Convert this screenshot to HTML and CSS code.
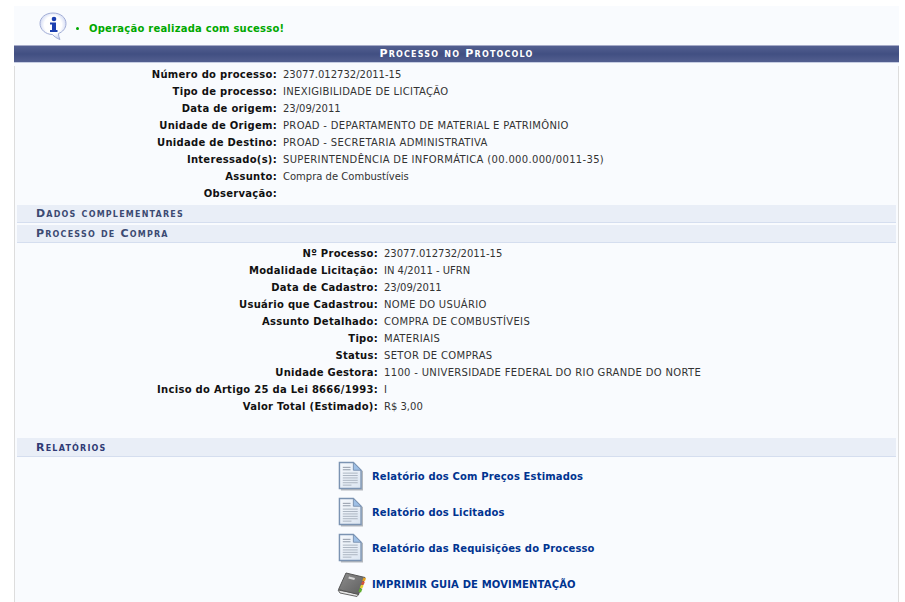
FILE: index.html
```html
<!DOCTYPE html>
<html lang="en">
<head>
    <meta charset="UTF-8">
    <title>Processo no Protocolo</title>
    <link rel="stylesheet" href="styles.css">
</head>
<body>
    <svg class="icon-defs" width="0" height="0">
        <defs>
            <linearGradient id="paper" x1="0" y1="0" x2="1" y2="1">
                <stop offset="0" stop-color="#f6f9fd"/>
                <stop offset="1" stop-color="#dbe5f1"/>
            </linearGradient>
            <radialGradient id="bubble" cx="0.5" cy="0.45" r="0.6">
                <stop offset="0.55" stop-color="#ffffff"/>
                <stop offset="1" stop-color="#bcc8ee"/>
            </radialGradient>
            <linearGradient id="cover" x1="0" y1="0" x2="1" y2="1">
                <stop offset="0" stop-color="#8e8e8e"/>
                <stop offset="1" stop-color="#5c5c5c"/>
            </linearGradient>
            <g id="doc">
                <path d="M3 29.500H25.500V10" fill="none" stroke="#b4b8bd" stroke-width="2"/>
                <path d="M1.500 1.500H16L24 9.500V28.500H1.500Z" fill="url(#paper)" stroke="#7b93b2" stroke-width="1.500"/>
                <path d="M16 1.500V9.500H24Z" fill="#9fc0e6" stroke="#7b93b2"/>
                <path d="M5 6.500H13M5 9H13" stroke="#8f98a5"/>
                <path d="M5 12.500H20.500M5 15H20.500M5 17.500H20.500M5 20H20.500M5 22.500H20.500M5 25H14" stroke="#aab3bf"/>
            </g>
        </defs>
    </svg>

    <main class="page">
        <div class="message">
            <svg class="info-icon" width="28" height="28" viewBox="0 0 28 28">
                <path d="M14 1C21.500 1 27 5.500 27 11.500C27 16.500 23.500 20 19.500 21.500C19.500 23.500 20 25.500 21 27.500C18 26.500 15 24.500 13.500 22.500C6.500 22.500 1 17.500 1 11.500C1 5.500 6.500 1 14 1Z" fill="url(#bubble)" stroke="#a3aed6"/>
                <circle cx="15" cy="7" r="2.300" fill="#1c3fb0"/>
                <path d="M11 10.500H17V18H18.500V20H11V18H13V12.500H11Z" fill="#1c3fb0"/>
            </svg>
            <ul class="message-list">
                <li>Operação realizada com sucesso!</li>
            </ul>
        </div>

        <h1 class="caption">Processo no Protocolo</h1>

        <div class="panel">
            <dl class="fields fields-main">
                <dt>Número do processo:</dt><dd>23077.012732/2011-15</dd>
                <dt>Tipo de processo:</dt><dd class="caps">INEXIGIBILIDADE DE LICITAÇÃO</dd>
                <dt>Data de origem:</dt><dd>23/09/2011</dd>
                <dt>Unidade de Origem:</dt><dd class="caps">PROAD - DEPARTAMENTO DE MATERIAL E PATRIMÔNIO</dd>
                <dt>Unidade de Destino:</dt><dd class="caps">PROAD - SECRETARIA ADMINISTRATIVA</dd>
                <dt>Interessado(s):</dt><dd class="caps">SUPERINTENDÊNCIA DE INFORMÁTICA (00.000.000/0011-35)</dd>
                <dt>Assunto:</dt><dd>Compra de Combustíveis</dd>
                <dt>Observação:</dt><dd></dd>
            </dl>

            <h2 class="subhead subhead-first">Dados complementares</h2>
            <h2 class="subhead">Processo de Compra</h2>

            <dl class="fields fields-compra">
                <dt>Nº Processo:</dt><dd>23077.012732/2011-15</dd>
                <dt>Modalidade Licitação:</dt><dd>IN 4/2011 - UFRN</dd>
                <dt>Data de Cadastro:</dt><dd>23/09/2011</dd>
                <dt>Usuário que Cadastrou:</dt><dd class="caps">NOME DO USUÁRIO</dd>
                <dt>Assunto Detalhado:</dt><dd class="caps">COMPRA DE COMBUSTÍVEIS</dd>
                <dt>Tipo:</dt><dd class="caps">MATERIAIS</dd>
                <dt>Status:</dt><dd class="caps">SETOR DE COMPRAS</dd>
                <dt>Unidade Gestora:</dt><dd class="caps">1100 - UNIVERSIDADE FEDERAL DO RIO GRANDE DO NORTE</dd>
                <dt>Inciso do Artigo 25 da Lei 8666/1993:</dt><dd>I</dd>
                <dt>Valor Total (Estimado):</dt><dd>R$ 3,00</dd>
            </dl>

            <h2 class="subhead subhead-dark">Relatórios</h2>

            <div class="reports">
                <a class="report" href="#">
                    <svg class="report-icon" width="25" height="30" viewBox="0 0 26 31"><use href="#doc"/></svg>
                    Relatório dos Com Preços Estimados
                </a>
                <a class="report" href="#">
                    <svg class="report-icon" width="25" height="30" viewBox="0 0 26 31"><use href="#doc"/></svg>
                    Relatório dos Licitados
                </a>
                <a class="report" href="#">
                    <svg class="report-icon" width="25" height="30" viewBox="0 0 26 31"><use href="#doc"/></svg>
                    Relatório das Requisições do Processo
                </a>
                <a class="report" href="#">
                    <svg class="report-icon book-icon" width="30" height="26" viewBox="0 0 30 26">
                        <path d="M1 19L3 22L20 25.500L22 23Z" fill="#e4e4e4" stroke="#666"/>
                        <path d="M9 2L28 6.500L21.500 23.500L1.500 18.500Z" fill="url(#cover)" stroke="#555"/>
                        <path d="M12 5.500L18 7L17.300 9L11.300 7.500Z" fill="#d6d6d6"/>
                        <path d="M26.500 6.500L29 7.200L27.800 10.500L25.300 9.800Z" fill="#e8a321"/>
                        <path d="M25.300 10.200L27.800 10.900L26.600 14L24.100 13.300Z" fill="#d9503a"/>
                        <path d="M24.100 13.700L26.600 14.400L25.300 17.500L22.800 16.800Z" fill="#e6d12c"/>
                        <path d="M22.800 17.200L25.300 17.900L24 21.500L21.500 20.800Z" fill="#5fae2e"/>
                    </svg>
                    IMPRIMIR GUIA DE MOVIMENTAÇÃO
                </a>
            </div>
        </div>
    </main>
</body>
</html>
```

FILE: styles.css
```css
body {
    margin: 0;
    background: #fff;
    font-family: "DejaVu Sans", Verdana, sans-serif;
    font-size: 10px;
    color: #333;
}

.icon-defs {
    display: block;
    height: 0;
}

.page {
    margin: 6px 6px 0 14px;
    height: 596px;
    overflow: hidden;
    background: #f9fbfe;
}

.message {
    display: flex;
    align-items: center;
    height: 39px;
    padding-left: 25px;
    box-sizing: border-box;
}

.info-icon {
    margin-top: 1px;
}

.message-list {
    margin: 6px 0 0 12px;
    padding: 0 0 0 10px;
    color: #00a800;
    font-weight: bold;
    letter-spacing: 0.23px;
}

.caption {
    margin: 0;
    height: 16px;
    line-height: 16px;
    text-align: center;
    font-size: 11px;
    font-weight: bold;
    font-variant: small-caps;
    letter-spacing: 1.2px;
    color: #fff;
    background: linear-gradient(#535f90, #414f82 50%, #535f90);
    border-top: 1px solid #a6abc8;
    border-bottom: 1px solid #c6cde2;
}

.panel {
    border-left: 1px solid #ddd;
    border-right: 1px solid #ddd;
    min-height: 560px;
}

.fields {
    display: grid;
    grid-auto-rows: 17px;
    column-gap: 6px;
    margin: 0;
    line-height: 17px;
}

.fields dt {
    text-align: right;
    font-weight: bold;
    letter-spacing: 0.28px;
    color: #111;
}

.fields dd {
    margin: 0;
}

.fields dd.caps {
    letter-spacing: 0.33px;
}

.fields-main {
    grid-template-columns: 262px 1fr;
    margin-top: 3px;
}

.fields-compra {
    grid-template-columns: 363px 1fr;
    margin-top: 2px;
}

.subhead {
    margin: 2px 2px 0;
    height: 17px;
    padding-left: 19px;
    line-height: 17px;
    font-size: 11px;
    font-weight: bold;
    font-variant: small-caps;
    letter-spacing: 1.2px;
    color: #3c4a72;
    background: #e9eef7;
    border-bottom: 1px solid #d5deef;
}

.subhead-first {
    margin-top: 3px;
}

.subhead-dark {
    margin-top: 23px;
    height: 18px;
    line-height: 20px;
    color: #2f3a74;
}

.reports {
    display: flex;
    flex-direction: column;
    margin-top: 1px;
    padding-left: 323px;
}

.report {
    display: flex;
    align-items: center;
    gap: 9px;
    height: 36px;
    font-weight: bold;
    letter-spacing: 0.15px;
    color: #003390;
    text-decoration: none;
}

.report-icon {
    flex: none;
}

.book-icon {
    margin: 0 -4px 0 -1px;
}
```
